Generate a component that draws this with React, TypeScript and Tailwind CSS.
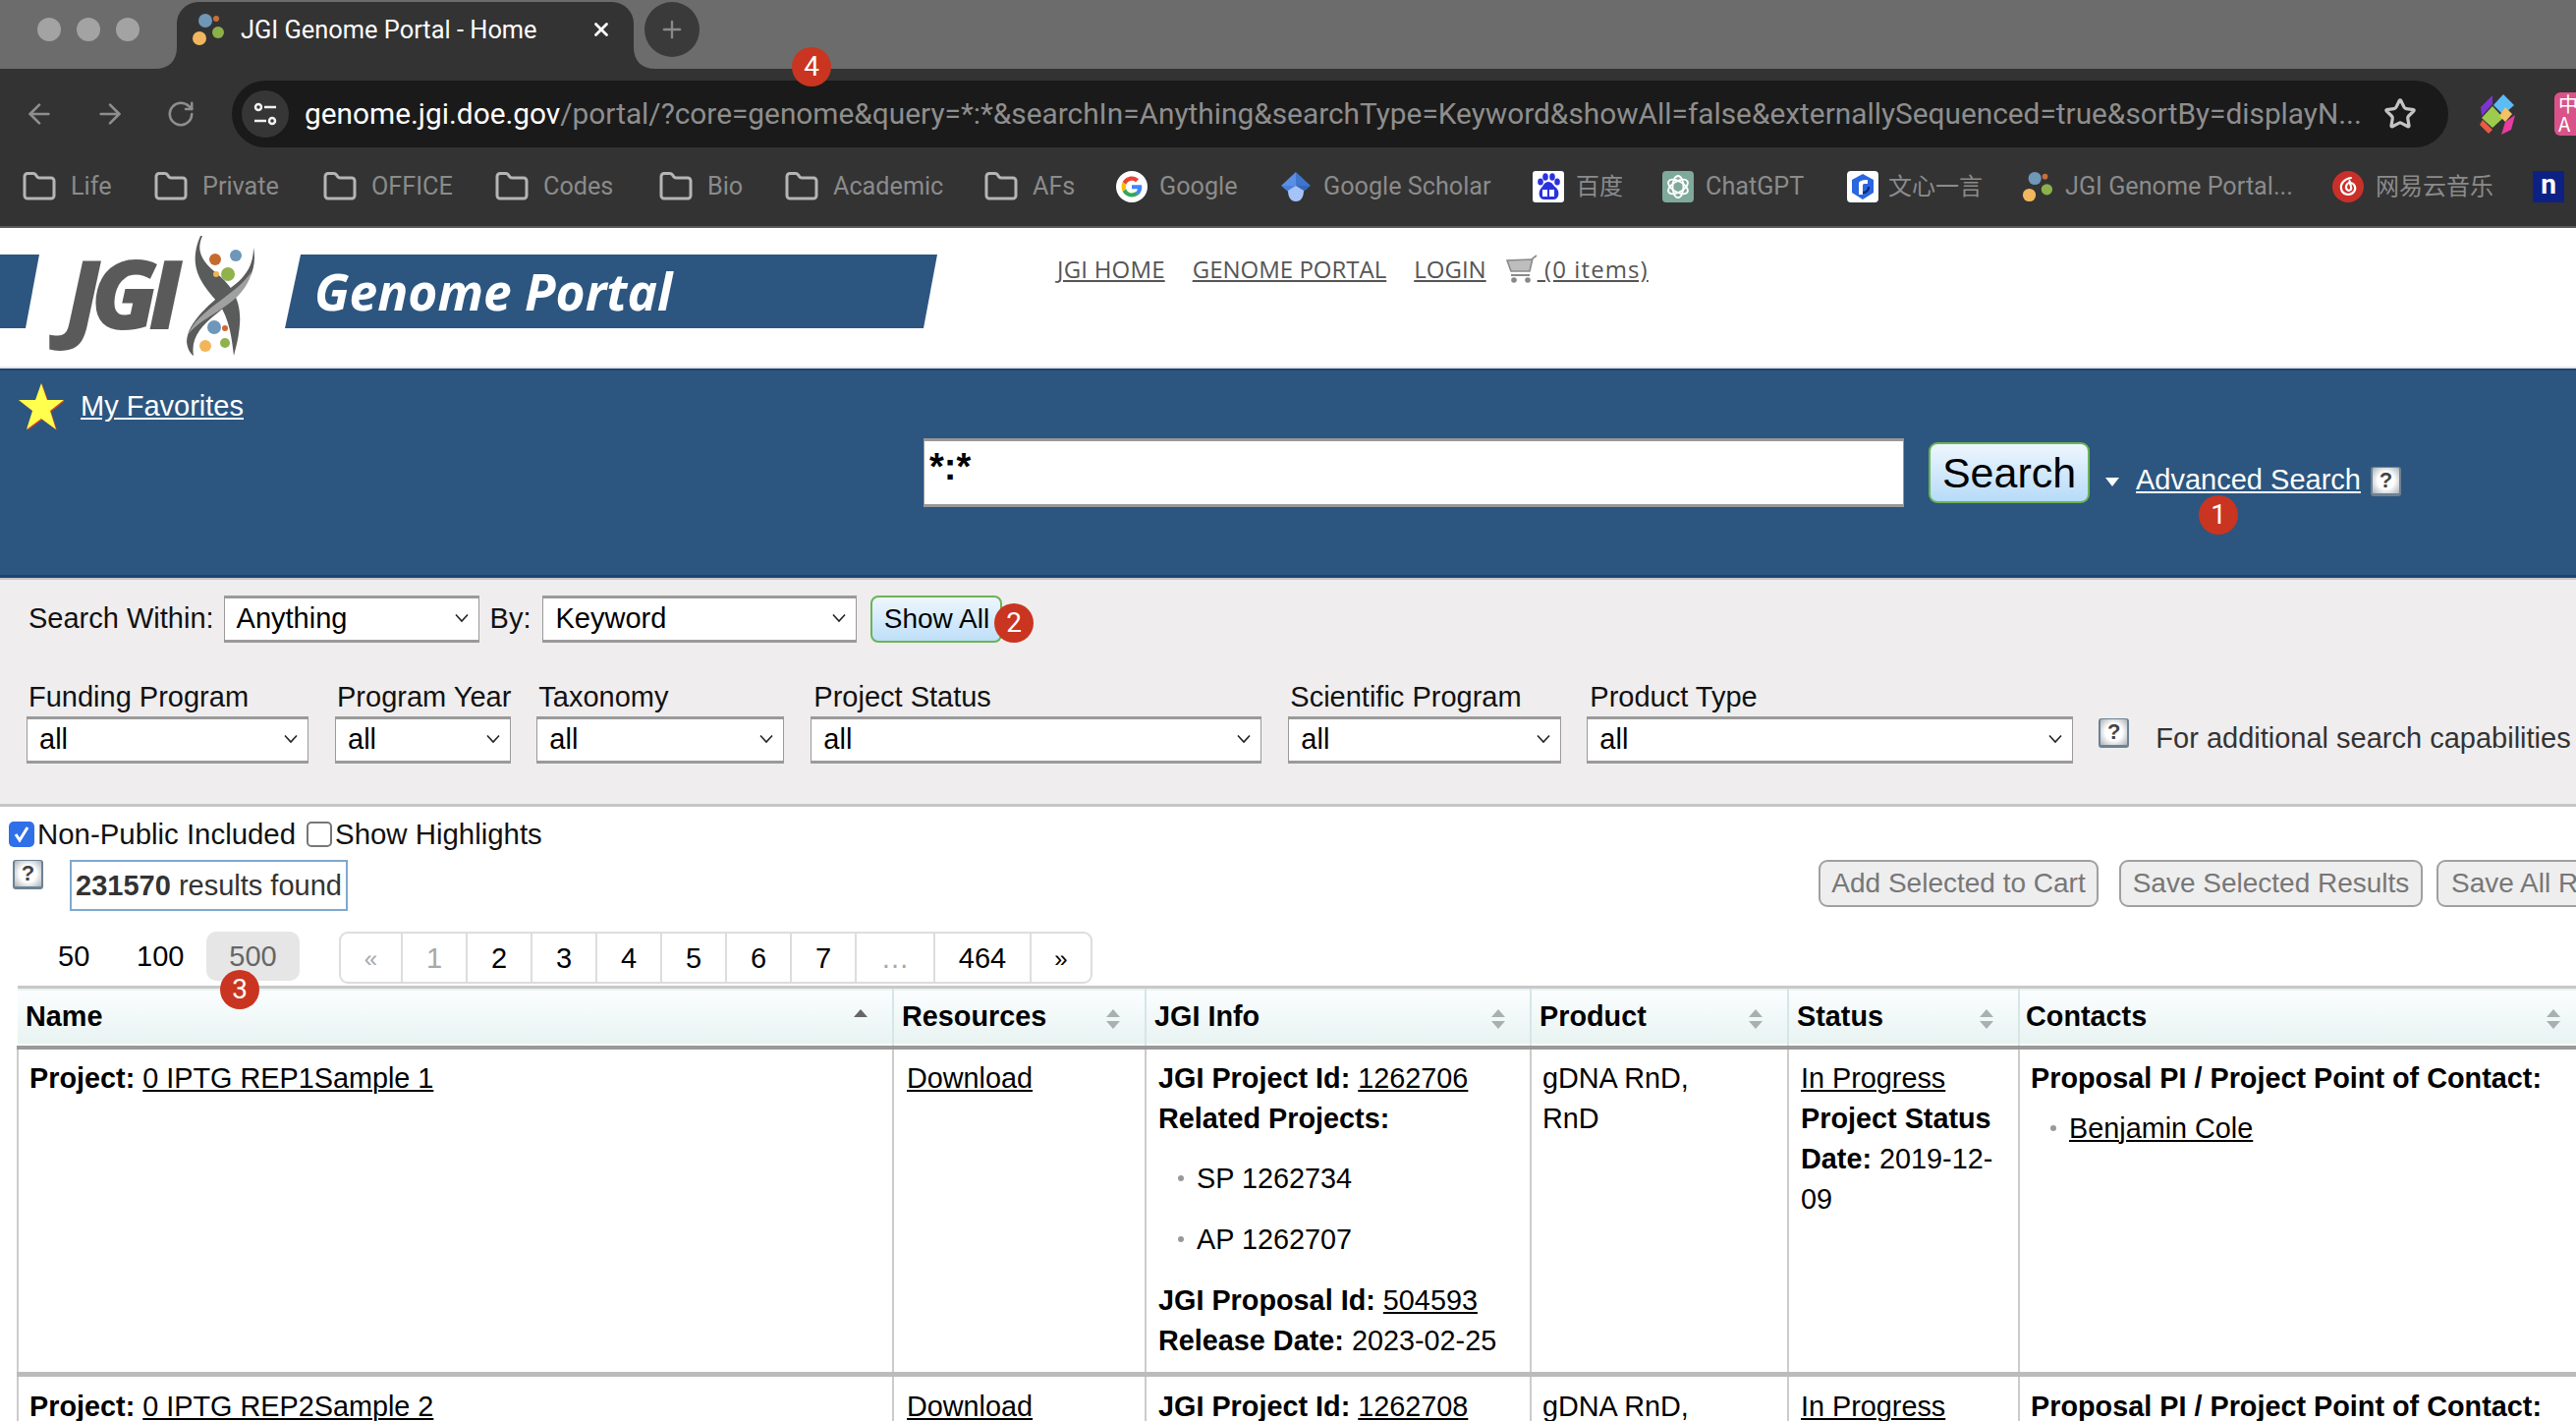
import React from "react";
import { ArrowLeft, ArrowRight, RotateCw, Star, X, Plus, Folder } from "lucide-react";

const SANS = "font-['Liberation_Sans',Arial,sans-serif]";

function JgiFavicon({ size = 34 }: { size?: number }) {
  return (
    <svg width={size} height={size} viewBox="0 0 34 34" className="shrink-0">
      <circle cx="14" cy="8" r="7" fill="#6f97b8" />
      <circle cx="25" cy="6" r="3" fill="#c8703a" />
      <circle cx="27" cy="20" r="6" fill="#8cb04a" />
      <circle cx="8" cy="26" r="7" fill="#f2b75e" />
    </svg>
  );
}

function GoogleIcon() {
  return (
    <svg width="32" height="32" viewBox="0 0 48 48" className="shrink-0">
      <circle cx="24" cy="24" r="24" fill="#fff" />
      <path fill="#EA4335" d="M24 14.5c2.6 0 4.6 1 6.1 2.4l4.5-4.4C31.8 9.900 28.200 8.300 24 8.300c-6.100 0-11.400 3.500-14 8.600l5.200 4c1.300-3.800 4.800-6.400 8.800-6.400z" />
      <path fill="#4285F4" d="M39.400 24.400c0-1.300-.1-2.200-.3-3.200H24v6h8.800c-.2 1.500-1.100 3.700-3.200 5.200l5 3.900c3-2.800 4.800-6.900 4.800-11.900z" />
      <path fill="#FBBC05" d="M15.200 27.100c-.3-1-.5-2-.5-3.100s.2-2.100.5-3.100l-5.200-4c-1.100 2.100-1.700 4.500-1.700 7.100s.6 5 1.700 7.100l5.200-4z" />
      <path fill="#34A853" d="M24 39.700c4.200 0 7.800-1.400 10.400-3.800l-5-3.900c-1.300.9-3.100 1.600-5.400 1.600-4 0-7.500-2.700-8.800-6.400l-5.200 4c2.600 5.100 7.900 8.500 14 8.500z" />
    </svg>
  );
}

function ScholarIcon() {
  return (
    <svg width="32" height="32" viewBox="0 0 32 32" className="shrink-0">
      <path d="M16 1 L31 15 L16 15 Z" fill="#3f76cc" />
      <path d="M16 1 L1 15 L16 15 Z" fill="#5a8fe6" />
      <path d="M1 15 L16 15 L16 21 L8 21 Z" fill="#4a80dc" />
      <path d="M31 15 L16 15 L16 21 L24 21 Z" fill="#3568b8" />
      <path d="M16 15 L24 20 C24 28 20 31 16 31 C12 31 8 28 8 20 Z" fill="#a5c3f7" />
    </svg>
  );
}

function BaiduIcon() {
  return (
    <svg width="32" height="32" viewBox="0 0 32 32" className="shrink-0">
      <rect width="32" height="32" rx="3" fill="#fff" />
      <ellipse cx="8" cy="11" rx="2.800" ry="3.600" fill="#2932e1" />
      <ellipse cx="13" cy="6" rx="2.800" ry="3.800" fill="#2932e1" />
      <ellipse cx="20" cy="6" rx="2.800" ry="3.800" fill="#2932e1" />
      <ellipse cx="25" cy="11" rx="2.800" ry="3.600" fill="#2932e1" />
      <path d="M16 11 C12 11 11 15 9 17 C5 21 6 29 12 29 L21 29 C27 29 28 21 24 17 C21 15 20 11 16 11 Z" fill="#2932e1" />
      <rect x="10" y="19" width="5" height="7" fill="#fff" />
      <rect x="17" y="19" width="5" height="7" fill="#fff" />
    </svg>
  );
}

function ChatGptIcon() {
  return (
    <svg width="32" height="32" viewBox="0 0 32 32" className="shrink-0">
      <rect width="32" height="32" rx="4" fill="#7fa99b" />
      <g fill="none" stroke="#fff" strokeWidth="1.800">
        <ellipse cx="16" cy="16" rx="5.500" ry="11" />
        <ellipse cx="16" cy="16" rx="5.500" ry="11" transform="rotate(60 16 16)" />
        <ellipse cx="16" cy="16" rx="5.500" ry="11" transform="rotate(120 16 16)" />
      </g>
    </svg>
  );
}

function WenxinIcon() {
  return (
    <svg width="32" height="32" viewBox="0 0 32 32" className="shrink-0">
      <rect width="32" height="32" rx="4" fill="#fff" />
      <path d="M16 3 L27 9 L27 22 L16 29 L5 22 L5 9 Z" fill="#2a66e0" />
      <path d="M12 24 L12 13 C12 10 15 9 21 9 L21 13 C17 13 16 13 16 15 L16 24 Z" fill="#fff" />
      <path d="M16 22 C20 22 22 19 22 16" fill="none" stroke="#0b2a78" strokeWidth="2.500" />
    </svg>
  );
}

function NeteaseIcon() {
  return (
    <svg width="32" height="32" viewBox="0 0 32 32" className="shrink-0">
      <circle cx="16" cy="16" r="16" fill="#c9302a" />
      <path d="M19 7 C12 8 8 13 9 18 C10 24 18 26 22 21 C25 17 22 12 18 12 C14 12 13 17 15 19 C17 21 20 19 19 16 L17.500 10" fill="none" stroke="#fff" strokeWidth="2.200" strokeLinecap="round" />
    </svg>
  );
}

function Bookmark({ icon, label, width, cjk = false }: { icon: React.ReactNode; label: string; width: string; cjk?: boolean }) {
  return (
    <div className={`flex items-center shrink-0 ${width}`}>
      {icon}
      <span className={`${cjk ? "text-[24px]" : "text-[25.200px]"} text-[#8b8b8b] whitespace-nowrap font-['Roboto','Noto_Sans_CJK_SC',sans-serif]`}>{label}</span>
    </div>
  );
}

function FolderIco() {
  return <Folder size={36} strokeWidth={2} className="text-[#b5b5b5] shrink-0 -ml-[2px] mr-[14px]" />;
}

function Badge({ n, className }: { n: number; className: string }) {
  return (
    <span className={`absolute w-[40px] h-[40px] rounded-full bg-[#c93521] text-white text-[28px] leading-[40px] text-center font-['Roboto',sans-serif] ${className}`}>
      {n}
    </span>
  );
}

function Help({ className = "" }: { className?: string }) {
  return (
    <span className={`inline-block shrink-0 w-[31px] h-[30px] rounded-[3px] bg-[radial-gradient(circle,#ffffff_45%,#aab2b8)] border-b-[3px] border-x-[2px] border-t-[1px] border-[#6d8292] text-center text-[22px] leading-[26px] font-bold text-[#444] ${className}`}>
      ?
    </span>
  );
}

function Sel({ value, width }: { value: string; width: string }) {
  return (
    <div className={`relative h-[48px] bg-white border border-[#9a9a9a] border-t-[3px] border-b-[3px] ${width} shrink-0 flex items-center pl-[12px] text-[29px] text-black`}>
      {value}
      <svg width="16" height="10" viewBox="0 0 16 10" className="absolute right-[9px] top-[15px]">
        <path d="M2 1.500 L8 8 L14 1.500" fill="none" stroke="#222" strokeWidth="1.600" />
      </svg>
    </div>
  );
}

function Filter({ label, width, ml, labelMl = "ml-[2px]" }: { label: string; width: string; ml: string; labelMl?: string }) {
  return (
    <div className={`flex flex-col shrink-0 ${ml}`}>
      <span className={`text-[29px] leading-[34px] mb-[3px] whitespace-nowrap ${labelMl}`}>{label}</span>
      <Sel value="all" width={width} />
    </div>
  );
}

function SortIcon({ asc = false }: { asc?: boolean }) {
  return (
    <svg width="16" height="22" viewBox="0 0 16 22" className="absolute right-[24px] top-[20px]">
      <path d="M8 1 L15 9 L1 9 Z" fill={asc ? "#666" : "#a8b0b0"} />
      {!asc && <path d="M8 21 L15 13 L1 13 Z" fill="#a8b0b0" />}
    </svg>
  );
}

const linkCls = "underline underline-offset-[2px] decoration-[2px]";

function Li({ children, className = "" }: { children: React.ReactNode; className?: string }) {
  return (
    <div className={`flex items-center ${className}`}>
      <span className="w-[6px] h-[6px] bg-[#999] rounded-full mr-[13px] ml-[20px] shrink-0" />
      <span>{children}</span>
    </div>
  );
}

function ColHead({ label, pl = "pl-[8px]", asc }: { label: string; pl?: string; asc?: boolean }) {
  return (
    <th className={`relative ${pl} text-left font-bold text-[28.800px] border-l-[2px] border-[#d5e6e6] first:border-l-0 p-0`}>
      {label}
      <SortIcon asc={asc} />
    </th>
  );
}

function Pg({ label, width, muted = false, small = false, last = false }: { label: string; width: string; muted?: boolean; small?: boolean; last?: boolean }) {
  return (
    <div className={`${width} flex items-center justify-center h-full pt-[2px] ${last ? "" : "border-r-[2px] border-[#ddd]"} ${muted ? "text-[#a8a8a8]" : "text-black"} ${small ? "text-[24px]" : "text-[29px]"}`}>
      {label}
    </div>
  );
}

export default function App() {
  const tdCls = "align-top border-l-[2px] border-[#ccc] pb-0";
  return (
    <div className={`relative w-[2622px] h-[1446px] overflow-hidden bg-white ${SANS} text-black`}>
      {/* Tab strip */}
      <div className="h-[70px] bg-[#6c6c6c] flex items-end relative">
        <div className="flex items-center gap-[16px] ml-[38px] self-start mt-[18px] w-[142px] shrink-0">
          <span className="w-[24px] h-[24px] rounded-full bg-[#a3a3a3]" />
          <span className="w-[24px] h-[24px] rounded-full bg-[#a3a3a3]" />
          <span className="w-[24px] h-[24px] rounded-full bg-[#a3a3a3]" />
        </div>
        <div className="relative w-[465px] h-[68px] bg-[#333] rounded-t-[22px] flex items-center pl-[15px] pb-[12px] shrink-0 font-['Roboto',sans-serif]">
          <svg width="22" height="22" viewBox="0 0 22 22" className="absolute -left-[22px] bottom-0"><path d="M22 0 V22 H0 C14 22 22 14 22 0 Z" fill="#333" /></svg>
          <svg width="22" height="22" viewBox="0 0 22 22" className="absolute -right-[22px] bottom-0"><path d="M0 0 V22 H22 C8 22 0 14 0 0 Z" fill="#333" /></svg>
          <JgiFavicon />
          <span className="ml-[16px] text-[25.400px] text-white whitespace-nowrap">JGI Genome Portal - Home</span>
          <X size={22} strokeWidth={3} className="text-white ml-[54px]" />
        </div>
        <div className="ml-[11px] self-start mt-[2px] w-[56px] h-[56px] rounded-full bg-[#3a3a3a] flex items-center justify-center">
          <Plus size={28} strokeWidth={2} className="text-[#8a8a8a]" />
        </div>
      </div>
      {/* Toolbar */}
      <div className="h-[80px] bg-[#333] flex items-center pt-[12px] relative">
        <ArrowLeft size={32} strokeWidth={2} className="text-[#8e8e8e] ml-[24px] shrink-0" />
        <ArrowRight size={32} strokeWidth={2} className="text-[#8e8e8e] ml-[40px] shrink-0" />
        <RotateCw size={30} strokeWidth={2} className="text-[#8e8e8e] ml-[41px] shrink-0" />
        <div className="ml-[37px] w-[2256px] h-[68px] shrink-0 rounded-full bg-[#1a1a1a] flex items-center pl-[10px] font-['Roboto',sans-serif]">
          <div className="w-[48px] h-[48px] rounded-full bg-[#363636] flex items-center justify-center shrink-0">
            <svg width="30" height="30" viewBox="0 0 30 30" fill="none" stroke="#f2f2f2" strokeWidth="2.500">
              <circle cx="8" cy="8" r="3" />
              <path d="M14 8 H26" />
              <path d="M4 22 H16" />
              <circle cx="22" cy="22" r="3" />
            </svg>
          </div>
          <div className="ml-[16px] w-[2100px] shrink-0 text-[29.820px] whitespace-nowrap overflow-hidden text-[#8e8e8e]">
            <span className="text-white">genome.jgi.doe.gov</span>/portal/?core=genome&amp;query=*:*&amp;searchIn=Anything&amp;searchType=Keyword&amp;showAll=false&amp;externallySequenced=true&amp;sortBy=displayN...
          </div>
          <Star size={34} strokeWidth={2.300} className="text-[#c4c4c4] ml-[16px] shrink-0" />
        </div>
        <svg width="40" height="44" viewBox="0 0 40 44" className="ml-[31px] shrink-0">
          <path d="M25 2 L36 13 L25 23 L15 13 Z" fill="#5bbcf6" />
          <path d="M14 14 L25 26 L14 36 L3 26 Z" fill="#9ccb4d" />
          <path d="M27 15 L34 22 L27 30 L21 24 Z" fill="#f4c261" />
          <path d="M4 28 L14 38 L10 42 L1 33 Z" fill="#e95a44" />
          <path d="M37 23 L33 38 L23 43 L27 30 Z" fill="#e83ca1" />
          <path d="M14 3 L2 15 L3 24 L14 12 Z" fill="#7c35cf" />
        </svg>
        <div className="ml-[37px] w-[44px] h-[44px] rounded-[6px] bg-[#d9538a] shrink-0 flex flex-col items-start justify-center pl-[4px] text-white text-[20px] leading-[20px] font-['Noto_Sans_CJK_SC',sans-serif]">
          <span>中</span>
          <span>A</span>
        </div>
      </div>
      {/* Bookmarks */}
      <div className="h-[80px] bg-[#333] flex items-center pl-[24px] border-b-[2px] border-[#5a5a5a] box-content overflow-hidden">
        <Bookmark icon={<FolderIco />} label="Life" width="w-[134px]" />
        <Bookmark icon={<FolderIco />} label="Private" width="w-[172px]" />
        <Bookmark icon={<FolderIco />} label="OFFICE" width="w-[175px]" />
        <Bookmark icon={<FolderIco />} label="Codes" width="w-[167px]" />
        <Bookmark icon={<FolderIco />} label="Bio" width="w-[128px]" />
        <Bookmark icon={<FolderIco />} label="Academic" width="w-[203px]" />
        <Bookmark icon={<FolderIco />} label="AFs" width="w-[133px]" />
        <Bookmark icon={<><GoogleIcon /><span className="w-[12px]" /></>} label="Google" width="w-[167px]" />
        <Bookmark icon={<><ScholarIcon /><span className="w-[12px]" /></>} label="Google Scholar" width="w-[257px]" />
        <Bookmark icon={<><BaiduIcon /><span className="w-[12px]" /></>} label="百度" width="w-[132px]" cjk />
        <Bookmark icon={<><ChatGptIcon /><span className="w-[12px]" /></>} label="ChatGPT" width="w-[188px]" />
        <Bookmark icon={<><WenxinIcon /><span className="w-[10px]" /></>} label="文心一言" width="w-[178px]" cjk />
        <Bookmark icon={<><JgiFavicon size={32} /><span className="w-[12px]" /></>} label="JGI Genome Portal..." width="w-[316px]" />
        <Bookmark icon={<><NeteaseIcon /><span className="w-[12px]" /></>} label="网易云音乐" width="w-[204px]" cjk />
        <div className="w-[32px] h-[32px] bg-[#0d2184] text-white font-bold text-[28px] leading-[28px] text-center shrink-0 font-['Roboto',sans-serif]">n</div>
      </div>
      <Badge n={4} className="left-[806px] top-[48px]" />

      {/* Site header */}
      <div className="h-[141px] bg-white flex items-start border-b-[2px] border-[#e6e6e6] box-content">
        <svg width="960" height="141" viewBox="0 0 960 141" className="shrink-0">
          <polygon points="0,27 40,27 26,102 0,102" fill="#2c5680" />
          <text x="66" y="103" fontFamily="'Open Sans',sans-serif" fontWeight="800" fontStyle="italic" fontSize="98" letterSpacing="-10" fill="#5a5a5a">JGI</text>
          {/* helix */}
          <path d="M206 8 C200 22 204 32 218 44 C236 58 246 74 244 98 C243 112 240 122 238 130 C236 114 234 92 222 76 C206 58 190 40 204 8 Z" fill="#5a5c5c" />
          <path d="M258 20 C258 38 250 50 236 60 C216 74 190 96 190 116 C191 124 194 128 197 130 C194 112 204 100 222 86 C242 70 264 50 258 20 Z" fill="#5a5c5c" />
          <path d="M256 44 C244 66 200 84 192 108 C206 88 250 78 256 44 Z" fill="#a0a0a0" />
          <circle cx="219" cy="32" r="6" fill="#c66b2f" />
          <circle cx="240" cy="28" r="6" fill="#6e97ba" />
          <circle cx="232" cy="47" r="7" fill="#8fb24a" />
          <circle cx="220" cy="47" r="3" fill="#f1b450" />
          <circle cx="218" cy="101" r="7" fill="#6e97ba" />
          <circle cx="229" cy="102" r="3" fill="#d2682f" />
          <circle cx="209" cy="120" r="6" fill="#f2b55a" />
          <circle cx="229" cy="117" r="5" fill="#8fb24a" />
          <polygon points="306,27 954,27 940,102 290,102" fill="#2c5680" />
          <text x="320" y="84" fontFamily="'Open Sans',sans-serif" fontWeight="700" fontStyle="italic" fontSize="51.500" fill="#fff">Genome Portal</text>
        </svg>
        <div className="flex items-center mt-[24px] ml-[116px] text-[24px] text-[#555] font-['Open_Sans',sans-serif]">
          <a className="underline tracking-[0.2px]">JGI HOME</a>
          <a className="underline ml-[28px]">GENOME PORTAL</a>
          <a className="underline ml-[28px]">LOGIN</a>
          <svg width="32" height="30" viewBox="0 0 32 30" className="ml-[20px]">
            <path d="M31 1 L27 4 L24 17 L5 17 L1 6 L26 5" fill="#bdbdbd" stroke="#8a8a8a" strokeWidth="1.600" />
            <path d="M5 21 H24" stroke="#888" strokeWidth="2" />
            <circle cx="8" cy="26" r="2.800" fill="#888" />
            <circle cx="22" cy="26" r="2.800" fill="#888" />
          </svg>
          <a className="underline tracking-[1.1px]">&nbsp;(0 items)</a>
        </div>
      </div>

      {/* Blue search bar */}
      <div className="h-[213px] bg-[#2c5680] border-t-[2px] border-b-[3px] border-[#1e4472] box-border relative">
        <div className="flex items-center pl-[18px] pt-[12px]">
          <svg width="48" height="50" viewBox="0 0 48 50" className="shrink-0">
            <path d="M25 2 L31 19 L48 19 L34 30 L40 49 L25 38 L10 49 L16 30 L2 19 L19 19 Z" fill="#d8402a" />
            <path d="M24 1 L30 18 L47 18 L33 29 L39 48 L24 37 L9 48 L15 29 L1 18 L18 18 Z" fill="#ffff4d" />
          </svg>
          <a className="ml-[16px] text-[29px] text-white underline">My Favorites</a>
        </div>
        <div className="flex items-center ml-[940px] mt-[7px]">
          <div className="w-[998px] h-[70px] bg-white border-t-[3px] border-b-[3px] border-x-[1px] border-[#999] text-[38px] font-bold leading-[40px] pl-[5px] pt-[6px]">*:*</div>
          <button className="ml-[25px] w-[164px] h-[62px] rounded-[9px] bg-gradient-to-b from-[#eef6fe] to-[#b7dbf8] border-[2px] border-[#6bb356] text-[43px] leading-none text-black">Search</button>
          <svg width="14" height="9" viewBox="0 0 14 9" className="ml-[16px] mt-[19px] shrink-0"><path d="M0 0 H14 L7 9 Z" fill="#fff" /></svg>
          <a className="ml-[17px] text-[29px] text-white underline mt-[15px] whitespace-nowrap">Advanced Search</a>
          <Help className="ml-[10px] mt-[18px]" />
        </div>
      </div>

      {/* Filter panel */}
      <div className="h-[233px] bg-[#efedee] border-t-[2px] border-b-[3px] border-[#c6c6c6] box-border text-[29px] text-[#111] relative">
        <div className="flex items-center pl-[29px] pt-[16px]">
          <span className="whitespace-nowrap">Search Within:</span>
          <div className="ml-[10px]"><Sel value="Anything" width="w-[260px]" /></div>
          <span className="ml-[11px]">By:</span>
          <div className="ml-[12px]"><Sel value="Keyword" width="w-[320px]" /></div>
          <button className="ml-[14px] w-[134px] h-[48px] rounded-[8px] bg-gradient-to-b from-[#eef6fe] to-[#bedff8] border-[2px] border-[#6bb356] text-[28px] leading-none text-black whitespace-nowrap">Show All</button>
        </div>
        <div className="flex items-end pl-[27px] mt-[38px]">
          <Filter label="Funding Program" width="w-[287px]" ml="" />
          <Filter label="Program Year" width="w-[179px]" ml="ml-[27px]" />
          <Filter label="Taxonomy" width="w-[252px]" ml="ml-[26px]" />
          <Filter label="Project Status" width="w-[459px]" ml="ml-[27px]" labelMl="ml-[3px]" />
          <Filter label="Scientific Program" width="w-[278px]" ml="ml-[27px]" />
          <Filter label="Product Type" width="w-[495px]" ml="ml-[26px]" labelMl="ml-[3px]" />
          <div className="flex items-start h-[48px] ml-[26px] shrink-0">
            <Help className="mt-[2px]" />
            <span className="ml-[27px] mt-[1px] whitespace-nowrap text-[#333] text-[29px]">For additional search capabilities</span>
          </div>
        </div>
      </div>
      <Badge n={2} className="left-[1012px] top-[614px]" />

      {/* Results area */}
      <div className="relative text-[29px] text-[#111]">
        <div className="flex items-center h-[52px] pt-[4px] pl-[9px] text-[29.400px]">
          <span className="w-[26px] h-[26px] rounded-[5px] bg-[#2f6fe8] flex items-center justify-center shrink-0">
            <svg width="20" height="20" viewBox="0 0 20 20"><path d="M4 10 L8 16 L16 3" fill="none" stroke="#fff" strokeWidth="3" /></svg>
          </span>
          <span className="ml-[3px] whitespace-nowrap">Non-Public Included</span>
          <span className="ml-[11px] w-[26px] h-[26px] rounded-[5px] bg-white border-[2px] border-[#777] shrink-0" />
          <span className="ml-[3px] whitespace-nowrap">Show Highlights</span>
        </div>
        <div className="flex items-start mt-[2px]">
          <Help className="ml-[13px]" />
          <div className="ml-[27px] w-[283px] h-[52px] shrink-0 pt-[2px] border-[2px] border-[#7fa8cf] flex items-center justify-center text-[#333] whitespace-nowrap">
            <b>231570</b>&nbsp;results found
          </div>
          <div className="flex items-center ml-[1497px] text-[#777] text-[28px] whitespace-nowrap shrink-0">
            <div className="w-[285px] h-[48px] rounded-[9px] bg-[#eee] border-[2px] border-[#a0a0a0] flex items-center justify-center shrink-0">Add Selected to Cart</div>
            <div className="ml-[21px] w-[309px] h-[48px] rounded-[9px] bg-[#eee] border-[2px] border-[#a0a0a0] flex items-center justify-center shrink-0">Save Selected Results</div>
            <div className="ml-[14px] w-[240px] h-[48px] rounded-[9px] bg-[#eee] border-[2px] border-[#a0a0a0] flex items-center pl-[13px] shrink-0">Save All Results</div>
          </div>
        </div>
        <div className="flex items-start h-[56px] mt-[21px] text-black">
          <span className="ml-[59px] w-[80px] h-[50px] pt-[2px] flex items-center">50</span>
          <span className="w-[71px] h-[50px] pt-[2px] flex items-center">100</span>
          <span className="w-[95px] h-[50px] pt-[2px] rounded-[10px] bg-[#e6e6e6] text-[#666] flex items-center justify-center">500</span>
          <div className="ml-[40px] w-[767px] h-[53px] rounded-[9px] border-[2px] border-[#ddd] flex items-center">
            <Pg label="«" width="w-[63px]" muted small />
            <Pg label="1" width="w-[66px]" muted />
            <Pg label="2" width="w-[66px]" />
            <Pg label="3" width="w-[66px]" />
            <Pg label="4" width="w-[66px]" />
            <Pg label="5" width="w-[66px]" />
            <Pg label="6" width="w-[66px]" />
            <Pg label="7" width="w-[66px]" />
            <Pg label="…" width="w-[80px]" muted />
            <Pg label="464" width="w-[98px]" />
            <Pg label="»" width="w-[60px]" small last />
          </div>
        </div>
      </div>

      {/* Table */}
      <table className="absolute left-[17px] top-[1003px] w-[2613px] table-fixed border-collapse text-[28.800px] leading-[41px] text-black">
        <colgroup>
          <col className="w-[891px]" />
          <col className="w-[257px]" />
          <col className="w-[392px]" />
          <col className="w-[262px]" />
          <col className="w-[235px]" />
          <col className="w-[576px]" />
        </colgroup>
        <thead>
          <tr className="h-[61px] bg-gradient-to-b from-[#fbfefe] to-[#e8f3f2] border-t-[3px] border-b-[4px] border-t-[#c8c8c8] border-b-[#999]">
            <ColHead label="Name" asc />
            <ColHead label="Resources" />
            <ColHead label="JGI Info" />
            <ColHead label="Product" />
            <ColHead label="Status" />
            <ColHead label="Contacts" pl="pl-[6px]" />
          </tr>
        </thead>
        <tbody>
          <tr className="h-[333px] border-b-[5px] border-[#bbb]">
            <td className={`${tdCls} pt-[9px] pl-[11px]`}>
              <b>Project:</b> <a className={linkCls}>0 IPTG REP1Sample 1</a>
            </td>
            <td className={`${tdCls} pt-[9px] pl-[13px]`}><a className={linkCls}>Download</a></td>
            <td className={`${tdCls} pt-[9px] pl-[12px]`}>
              <b>JGI Project Id:</b> <a className={linkCls}>1262706</a>
              <br />
              <b>Related Projects:</b>
              <Li className="mt-[20px]">SP 1262734</Li>
              <Li className="mt-[21px]">AP 1262707</Li>
              <div className="mt-[21px]"><b>JGI Proposal Id:</b> <a className={linkCls}>504593</a></div>
              <b>Release Date:</b> 2023-02-25
            </td>
            <td className={`${tdCls} pt-[9px] pl-[11px] pr-[60px]`}>gDNA RnD, RnD</td>
            <td className={`${tdCls} pt-[9px] pl-[12px]`}>
              <a className={linkCls}>In Progress</a>
              <br />
              <b>Project Status Date:</b> 2019-12-09
            </td>
            <td className={`${tdCls} pt-[9px] pl-[11px]`}>
              <b>Proposal PI / Project Point of Contact:</b>
              <Li className="mt-[10px]"><a className={linkCls}>Benjamin Cole</a></Li>
            </td>
          </tr>
          <tr className="h-[60px]">
            <td className={`${tdCls} pt-[10px] pl-[11px]`}>
              <b>Project:</b> <a className={linkCls}>0 IPTG REP2Sample 2</a>
            </td>
            <td className={`${tdCls} pt-[10px] pl-[13px]`}><a className={linkCls}>Download</a></td>
            <td className={`${tdCls} pt-[10px] pl-[12px]`}>
              <b>JGI Project Id:</b> <a className={linkCls}>1262708</a>
            </td>
            <td className={`${tdCls} pt-[10px] pl-[11px]`}>gDNA RnD,</td>
            <td className={`${tdCls} pt-[10px] pl-[12px]`}><a className={linkCls}>In Progress</a></td>
            <td className={`${tdCls} pt-[10px] pl-[11px]`}><b>Proposal PI / Project Point of Contact:</b></td>
          </tr>
        </tbody>
      </table>
      <Badge n={1} className="left-[2238px] top-[504px]" />
      <Badge n={3} className="left-[224px] top-[987px]" />
    </div>
  );
}
